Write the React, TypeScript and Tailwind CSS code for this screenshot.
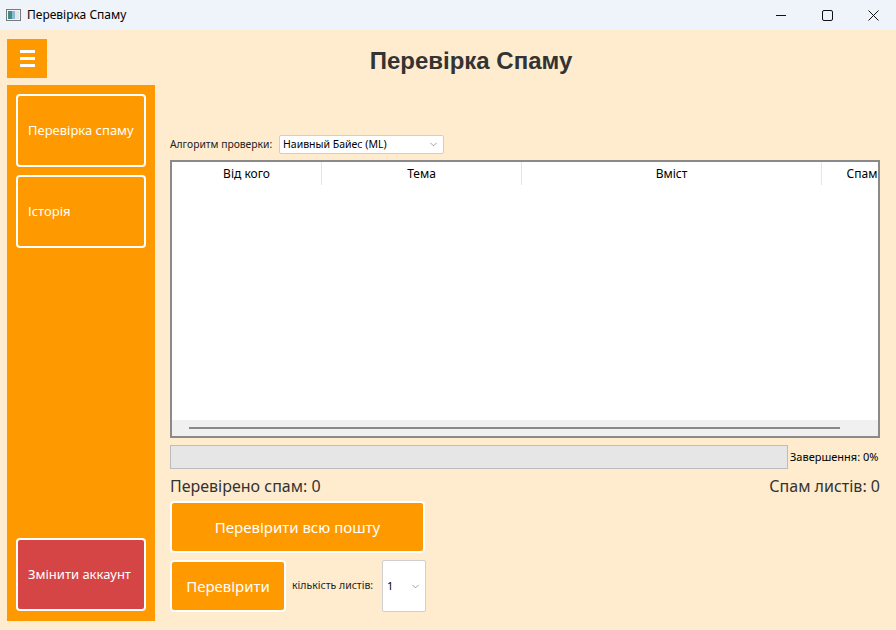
import { ChevronDown } from "lucide-react";

const ui = { fontFamily: '"Noto Sans", "Open Sans", sans-serif' };

function SideButton({ label, red }: { label: string; red?: boolean }) {
    return (
        <button
            className={`w-[130px] h-[73px] rounded-[4px] border-2 border-white text-white text-[13px] text-left pl-[10px] ${red ? "bg-[#d64545]" : "bg-[#ff9900]"}`}
        >
            {label}
        </button>
    );
}

export default function App() {
    const columns = [
        { name: "Від кого", w: "w-[150px]" },
        { name: "Тема", w: "w-[200px]" },
        { name: "Вміст", w: "w-[300px]" },
        { name: "Спам", w: "w-[80px]" },
    ];

    return (
        <div className="w-[896px] h-[630px] flex flex-col bg-[#ffebcd] overflow-hidden" style={ui}>
            {/* window title bar */}
            <div className="h-[30px] shrink-0 bg-[#eff3fa] flex items-center">
                <svg width="15" height="12" viewBox="0 0 15 12" className="ml-[6px]">
                    <rect x="0.5" y="0.5" width="14" height="11" fill="#f4f4f4" stroke="#7a7a7a" />
                    <rect x="2" y="2" width="4" height="8" fill="#3f8f7f" />
                    <rect x="6" y="2" width="3" height="8" fill="#8fb6d8" />
                    <rect x="9" y="2" width="4" height="8" fill="#dfe7ee" />
                </svg>
                <span className="ml-[6px] text-[12px] text-black">Перевірка Спаму</span>
                <div className="ml-auto flex items-center h-full">
                    <div className="w-[46px] h-full flex items-center justify-center">
                        <svg width="10" height="10" viewBox="0 0 10 10">
                            <path d="M0 5.5h10" stroke="#111" strokeWidth="1" />
                        </svg>
                    </div>
                    <div className="w-[46px] h-full flex items-center justify-center">
                        <svg width="11" height="11" viewBox="0 0 11 11">
                            <rect x="0.5" y="0.5" width="10" height="10" rx="1.5" fill="none" stroke="#111" />
                        </svg>
                    </div>
                    <div className="w-[46px] h-full flex items-center justify-center">
                        <svg width="11" height="11" viewBox="0 0 11 11">
                            <path d="M0.5 0.5l10 10M10.5 0.5l-10 10" stroke="#111" strokeWidth="1" />
                        </svg>
                    </div>
                </div>
            </div>

            <div className="flex-1 flex flex-col pt-[9px] px-[7px]">
                {/* top row */}
                <div className="h-[39px] flex items-center">
                    <button className="w-[40px] h-[39px] bg-[#ff9900] flex flex-col items-center justify-center gap-[4px]">
                        <span className="block w-[15px] h-[3px] bg-white" />
                        <span className="block w-[15px] h-[3px] bg-white" />
                        <span className="block w-[15px] h-[3px] bg-white" />
                    </button>
                    <h1
                        className="flex-1 text-center text-[24px] font-bold text-[#333333] pt-[4px] pl-[6px]"
                        style={{ fontFamily: '"Liberation Sans", Arial, sans-serif' }}
                    >
                        Перевірка Спаму
                    </h1>
                </div>

                <div className="mt-[7px] flex">
                    {/* sidebar */}
                    <div className="w-[148px] h-[536px] bg-[#ff9900] flex flex-col p-[9px] pb-[10px] gap-[8px]">
                        <SideButton label="Перевірка спаму" />
                        <SideButton label="Історія" />
                        <div className="mt-auto">
                            <SideButton label="Змінити аккаунт" red />
                        </div>
                    </div>

                    {/* content */}
                    <div className="ml-[15px] w-[710px] flex flex-col pt-[50px]">
                        <div className="flex items-center h-[19px]">
                            <span className="w-[109px] whitespace-nowrap text-[10.3px] text-[#222]">Алгоритм проверки:</span>
                            <div className="w-[165px] h-[19px] bg-white border border-[#cfcfcf] rounded-[2px] flex items-center pl-[3px] pr-[4px]">
                                <span className="text-[10.5px] text-black">Наивный Байес (ML)</span>
                                <ChevronDown size={11} strokeWidth={1.2} className="ml-auto text-[#555]" />
                            </div>
                        </div>

                        <div className="mt-[6px] h-[278px] border-2 border-[#8a8a8a] bg-white flex flex-col overflow-hidden">
                            <div className="h-[23px] flex shrink-0">
                                {columns.map((c, i) => (
                                    <div
                                        key={c.name}
                                        className={`${c.w} shrink-0 flex items-center justify-center text-[12px] text-black ${i < 3 ? "border-r border-[#e5e5e5]" : ""}`}
                                    >
                                        {c.name}
                                    </div>
                                ))}
                            </div>
                            <div className="flex-1" />
                            <div className="h-[16px] bg-[#f0f0f0] flex items-center pl-[17px]">
                                <div className="w-[651px] h-[2px] bg-[#888888]" />
                            </div>
                        </div>

                        <div className="mt-[7px] flex items-center">
                            <div className="w-[618px] h-[24px] bg-[#e6e6e6] border border-[#bcbcbc]" />
                            <span className="ml-[2px] text-[11px] text-black">Завершення: 0%</span>
                        </div>

                        <div className="mt-[7px] flex items-center justify-between text-[16px] text-[#333] leading-[20px]">
                            <span>Перевірено спам: 0</span>
                            <span>Спам листів: 0</span>
                        </div>

                        <button className="mt-[5px] w-[255px] h-[52px] bg-[#ff9900] border-2 border-white rounded-[4px] text-white text-[15px]">
                            Перевірити всю пошту
                        </button>

                        <div className="mt-[7px] flex items-center">
                            <button className="w-[116px] h-[52px] bg-[#ff9900] border-2 border-white rounded-[4px] text-white text-[15px]">
                                Перевірити
                            </button>
                            <span className="ml-[6px] w-[84px] whitespace-nowrap text-[10.5px] text-[#222]">кількість листів:</span>
                            <div className="ml-[6px] w-[44px] h-[52px] bg-white border border-[#cfcfcf] rounded-[2px] flex items-center pl-[4px] pr-[4px]">
                                <span className="text-[11px] text-black">1</span>
                                <ChevronDown size={11} strokeWidth={1.2} className="ml-auto text-[#555]" />
                            </div>
                        </div>
                    </div>
                </div>
            </div>
        </div>
    );
}
